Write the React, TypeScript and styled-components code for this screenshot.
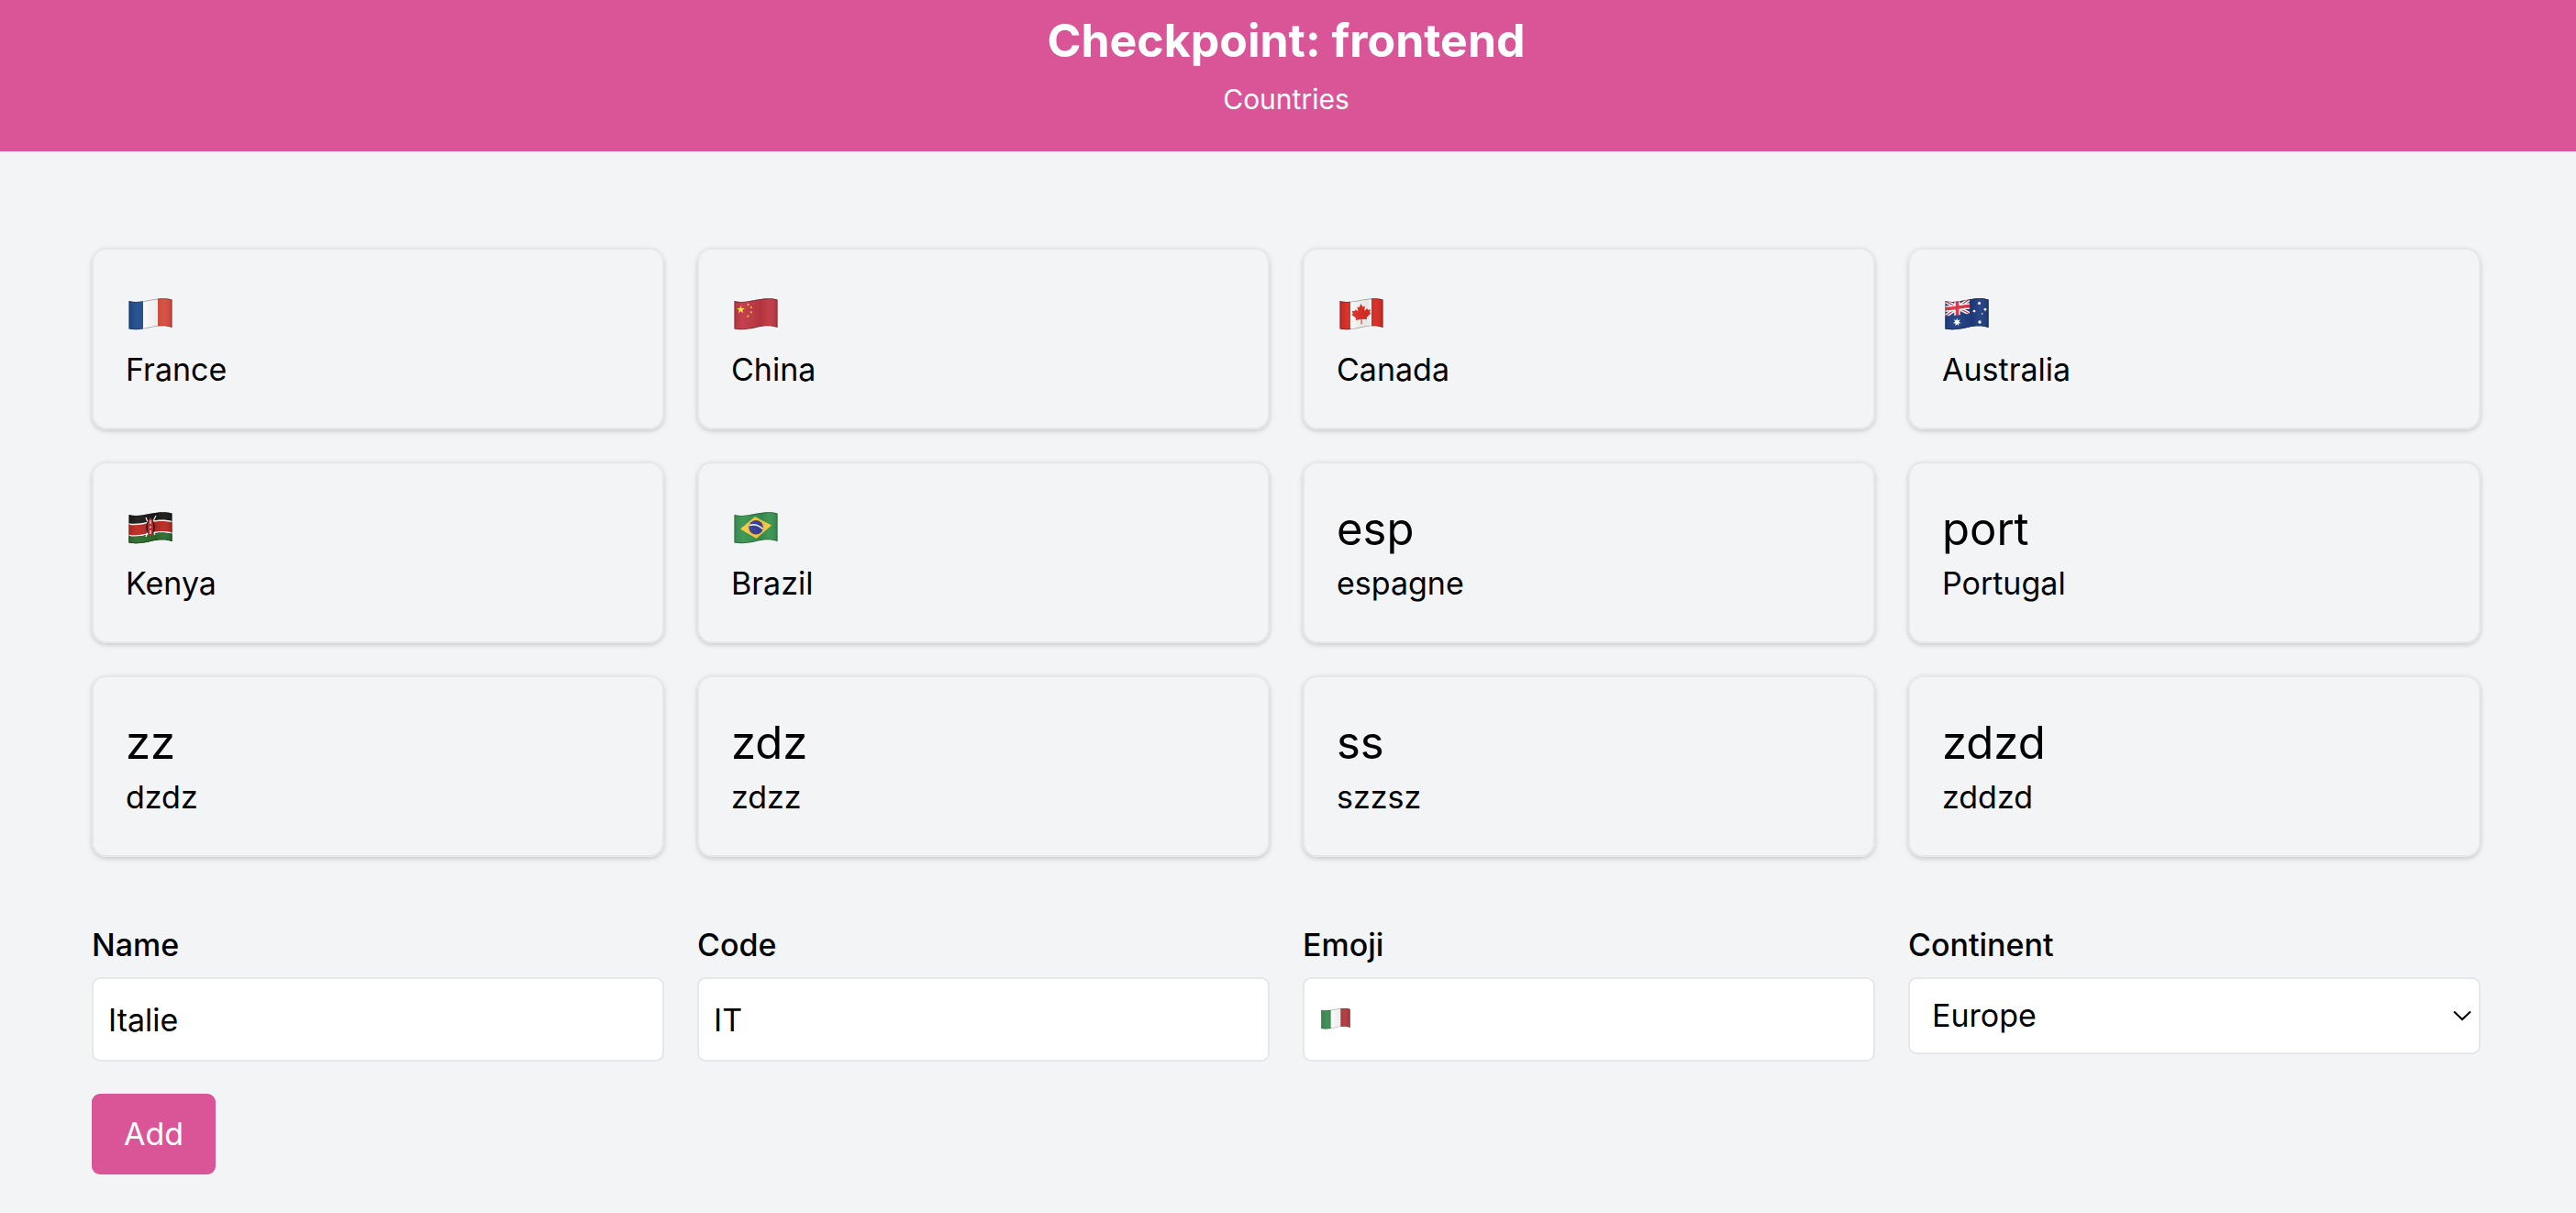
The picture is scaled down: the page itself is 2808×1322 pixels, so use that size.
import React, { useId, useState } from 'react';
import styled, { createGlobalStyle } from 'styled-components';

const pink = '#da5597';
const line = '#e5e7eb';

const GlobalStyle = createGlobalStyle`
  *, *::before, *::after { box-sizing: border-box; }
  body {
    margin: 0;
    min-height: 100vh;
    background: #f3f4f6;
    color: #000;
    font-family: Inter, 'Liberation Sans', sans-serif;
    font-size: 34px;
    line-height: 54px;
  }
  button, input, select { font: inherit; color: inherit; }
`;

const Header = styled.header`
  display: flex;
  flex-direction: column;
  align-items: center;
  padding: 10px 4px 30px 0;
  background: ${pink};
  color: #fff;
`;

const Title = styled.h1`
  margin: 0;
  font-size: 50px;
  line-height: 68px;
  font-weight: 700;
`;

const Subtitle = styled.p`
  margin: 3px 0 0;
  font-size: 30px;
  line-height: 54px;
`;

const Main = styled.main`
  display: flex;
  flex-direction: column;
  gap: 69px;
  padding: 105px 104px 40px 100px;
`;

const CardGrid = styled.ul`
  display: grid;
  grid-template-columns: repeat(4, minmax(0, 1fr));
  gap: 35px 36px;
  margin: 0;
  padding: 0;
  list-style: none;
`;

const Card = styled.li`
  padding: 36px 35px;
  border: 2px solid ${line};
  border-radius: 16px;
  box-shadow: 0 2px 6px rgba(0, 0, 0, 0.1), 0 2px 4px rgba(0, 0, 0, 0.08);
`;

const Emblem = styled.div`
  display: flex;
  align-items: center;
  height: 68px;
  padding-top: 4px;
  font-size: 49px;
  line-height: 64px;
`;

const CountryName = styled.div`
  line-height: 54px;
`;

const FlagSvg = styled.svg<{ $small?: boolean }>`
  display: block;
  width: ${(p) => (p.$small ? 32 : 48)}px;
  height: ${(p) => (p.$small ? 24 : 36)}px;
  margin: ${(p) => (p.$small ? '0' : '0 0 4px 3px')};
`;

const Form = styled.form`
  display: flex;
  flex-direction: column;
  align-items: flex-start;
  gap: 35px;
`;

const Fields = styled.div`
  display: grid;
  grid-template-columns: repeat(4, minmax(0, 1fr));
  align-items: start;
  gap: 36px;
  width: 100%;
`;

const FieldBox = styled.div`
  display: flex;
  flex-direction: column;
  gap: 8px;
`;

const Label = styled.label`
  font-weight: 500;
`;

const Control = styled.div`
  position: relative;
  display: flex;
`;

const Input = styled.input`
  width: 100%;
  padding: 17px 16px;
  border: 2px solid ${line};
  border-radius: 9px;
  background: #fff;
  height: 92px;
`;

const Select = styled.select`
  appearance: none;
  width: 100%;
  height: 84px;
  padding: 0 48px 0 24px;
  border: 2px solid ${line};
  border-radius: 9px;
  background: #fff;
`;

const InputMark = styled.span`
  position: absolute;
  left: 20px;
  top: 33px;
  pointer-events: none;
`;

const Chevron = styled.svg`
  position: absolute;
  right: 9px;
  top: 36px;
  width: 22px;
  height: 12px;
  pointer-events: none;
`;

const AddButton = styled.button`
  padding: 17px 35px;
  border: 0;
  border-radius: 9px;
  background: ${pink};
  color: #fff;
`;

type Code = 'FR' | 'CN' | 'CA' | 'AU' | 'KE' | 'BR' | 'IT';

const star = (cx: number, cy: number, r: number, points = 5, inner = 0.4) =>
  Array.from({ length: points * 2 }, (_, i) => {
    const a = (Math.PI * i) / points - Math.PI / 2;
    const d = i % 2 ? r * inner : r;
    return `${(cx + d * Math.cos(a)).toFixed(2)},${(cy + d * Math.sin(a)).toFixed(2)}`;
  }).join(' ');

/* A band between two heights that follows the wave of the cloth. */
const band = (y1: number, y2: number) =>
  `M0 ${y1 + 3}C7 ${y1 + 5} 16 ${y1 + 3} 24 ${y1 + 1}S41 ${y1 - 1} 48 ${y1 + 1}V${y2 + 1}C41 ${y2 - 1} 32 ${y2 - 1} 24 ${y2 + 1}S7 ${y2 + 5} 0 ${y2 + 3}Z`;

const outline = 'M.5 4C8 6 16 4.5 24 2.8S41 .5 47.500 2.5V33C41 30.5 32 31 24 33S8 36 .5 34.5Z';

const artwork: Record<Code, React.ReactNode> = {
  FR: (
    <>
      <path fill="#fff" d="M0 0h48v36H0z" />
      <path fill="#1d4a8c" d="M0 0h16v36H0z" />
      <path fill="#d64a3b" d="M32 0h16v36H32z" />
    </>
  ),
  IT: (
    <>
      <path fill="#fff" d="M0 0h48v36H0z" />
      <path fill="#3a8a50" d="M0 0h16v36H0z" />
      <path fill="#ad373b" d="M32 0h16v36H32z" />
    </>
  ),
  CN: (
    <>
      <path fill="#bf3642" d="M0 0h48v36H0z" />
      <g fill="#fbe43a">
        <polygon points={star(7.5, 13.5, 4.6)} />
        <polygon points={star(15.5, 8, 1.6)} />
        <polygon points={star(18.8, 11, 1.6)} />
        <polygon points={star(18.8, 16.3, 1.6)} />
        <polygon points={star(15.3, 20.5, 1.6)} />
      </g>
    </>
  ),
  CA: (
    <>
      <path fill="#f7f7f7" d="M0 0h48v36H0z" />
      <path fill="#d4291f" d="M0 0h12v36H0zM35 0h13v36H35z" />
      <path
        fill="#dc2e25"
        d="M23.5 7l2 3.6 2.4-.9-.7 5.2 3.1-2.8.7 1.7 3-.5-1 3.3 1.4 1-4.8 4.4.6 2.1-5.7-.4.2 5.6h-1.2l.1-5.400-5.8 1 .6-2.2-5.1-3.6 1.5-1.1-1.2-3.2 3.1.2.7-1.8 3 2.4-.9-5.1 2.1.6z"
      />
    </>
  ),
  AU: (
    <>
      <path fill="#1e3c80" d="M0 0h48v36H0z" />
      <path stroke="#fff" strokeWidth="4" d="M0 4l27 14M0 21L27 2" />
      <path stroke="#d9394a" strokeWidth="1.4" d="M0 4l27 14M0 21L27 2" />
      <path stroke="#fff" strokeWidth="6.4" d="M13.5 0v20M0 12.5C9 13 17 10 27 9.5" />
      <path stroke="#dc3344" strokeWidth="3.6" d="M13.5 0v20M0 12.5C9 13 17 10 27 9.5" />
      <path fill="#1e3c80" d="M0 20c10 1 18-1.5 27-2V0h21v36H0z" />
      <g fill="#fff">
        <polygon points={star(13.3, 27.2, 4.6, 7, 0.45)} />
        <polygon points={star(37.5, 6.5, 2, 7, 0.6)} />
        <polygon points={star(32, 15, 1.8, 7, 0.6)} />
        <polygon points={star(44, 13.2, 1.9, 7, 0.6)} />
        <polygon points={star(38, 27, 2.2, 7, 0.6)} />
        <polygon points={star(40.7, 18, 1.2)} />
      </g>
    </>
  ),
  KE: (
    <>
      <path fill="#181818" d="M0 0h48v36H0z" />
      <path fill="#fff" d={band(10, 24)} />
      <path fill="#b92720" d={band(11.5, 22.5)} />
      <path fill="#2b6a2a" d={band(24, 42)} />
      <path stroke="#fff" strokeWidth="1.2" d="M19 7l2 5M30 5l-3 6M21 23l-2 5M27 22l2 4" />
      <ellipse cx="24" cy="17.5" rx="4.8" ry="8.5" fill="#181818" />
      <ellipse cx="24" cy="17.5" rx="3" ry="10" fill="#c92a2a" />
      <path stroke="#fff" strokeWidth="1.2" d="M24 10v4M24 16.500v2M24 21v4" />
    </>
  ),
  BR: (
    <>
      <path fill="#36924f" d="M0 0h48v36H0z" />
      <path fill="#f6cb3c" d="M7 19.5L23 6l18 9.5L24.5 30z" />
      <circle cx="24" cy="17.8" r="7.800" fill="#3b3f99" />
      <path d="M16.5 15.5c5-1.5 11 0 15 4" stroke="#dff0ee" strokeWidth="1.8" />
    </>
  ),
};

function Flag({ code, name, small }: { code: Code; name: string; small?: boolean }) {
  const id = useId();
  return (
    <FlagSvg $small={small} viewBox="0 0 48 36" role="img" aria-label={name} fill="none">
      <defs>
        <clipPath id={`${id}c`}>
          <path d={outline} />
        </clipPath>
        <linearGradient id={`${id}g`} x1="0" x2="1">
          <stop offset="0" stopColor="#000" stopOpacity=".08" />
          <stop offset=".2" stopColor="#fff" stopOpacity=".06" />
          <stop offset=".62" stopColor="#000" stopOpacity=".07" />
          <stop offset=".8" stopColor="#fff" stopOpacity=".05" />
          <stop offset="1" stopColor="#000" stopOpacity=".12" />
        </linearGradient>
      </defs>
      <g clipPath={`url(#${id}c)`}>
        {artwork[code]}
        <path fill={`url(#${id}g)`} d="M0 0h48v36H0z" />
        <path stroke="#000" strokeOpacity=".35" strokeWidth="1.5" d={outline} />
      </g>
    </FlagSvg>
  );
}

const countries: { name: string; flag?: Code; emoji?: string }[] = [
  { name: 'France', flag: 'FR' },
  { name: 'China', flag: 'CN' },
  { name: 'Canada', flag: 'CA' },
  { name: 'Australia', flag: 'AU' },
  { name: 'Kenya', flag: 'KE' },
  { name: 'Brazil', flag: 'BR' },
  { name: 'espagne', emoji: 'esp' },
  { name: 'Portugal', emoji: 'port' },
  { name: 'dzdz', emoji: 'zz' },
  { name: 'zdzz', emoji: 'zdz' },
  { name: 'szzsz', emoji: 'ss' },
  { name: 'zddzd', emoji: 'zdzd' },
];

export default function App() {
  const [name, setName] = useState('Italie');
  const [code, setCode] = useState('IT');
  const [emoji, setEmoji] = useState('');
  const [continent, setContinent] = useState('Europe');

  return (
    <>
      <GlobalStyle />
      <Header>
        <Title>Checkpoint: frontend</Title>
        <Subtitle>Countries</Subtitle>
      </Header>
      <Main>
        <CardGrid>
          {countries.map((c) => (
            <Card key={c.name}>
              <Emblem>{c.flag ? <Flag code={c.flag} name={`Flag of ${c.name}`} /> : c.emoji}</Emblem>
              <CountryName>{c.name}</CountryName>
            </Card>
          ))}
        </CardGrid>
        <Form onSubmit={(e) => e.preventDefault()}>
          <Fields>
            <FieldBox>
              <Label htmlFor="name">Name</Label>
              <Input id="name" value={name} onChange={(e) => setName(e.target.value)} />
            </FieldBox>
            <FieldBox>
              <Label htmlFor="code">Code</Label>
              <Input id="code" value={code} onChange={(e) => setCode(e.target.value)} />
            </FieldBox>
            <FieldBox>
              <Label htmlFor="emoji">Emoji</Label>
              <Control>
                <Input id="emoji" value={emoji} onChange={(e) => setEmoji(e.target.value)} />
                {emoji === '' && (
                  <InputMark>
                    <Flag code="IT" name="Flag of Italy" small />
                  </InputMark>
                )}
              </Control>
            </FieldBox>
            <FieldBox>
              <Label htmlFor="continent">Continent</Label>
              <Control>
                <Select id="continent" value={continent} onChange={(e) => setContinent(e.target.value)}>
                  <option>Europe</option>
                </Select>
                <Chevron viewBox="0 0 22 12" fill="none" stroke="#000" strokeWidth="2" aria-hidden="true">
                  <path d="M2 1.5l9 8.500 9-8.500" />
                </Chevron>
              </Control>
            </FieldBox>
          </Fields>
          <AddButton type="submit">Add</AddButton>
        </Form>
      </Main>
    </>
  );
}
